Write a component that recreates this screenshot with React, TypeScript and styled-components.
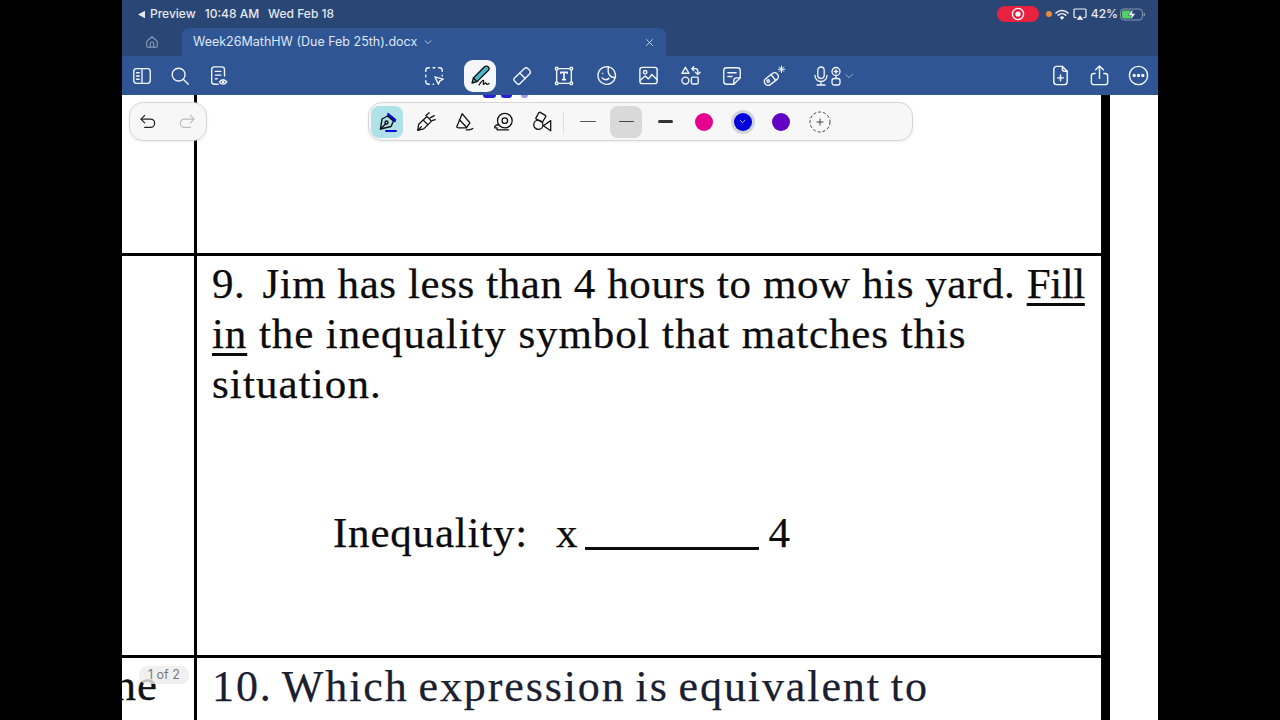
import React from 'react';
import styled, { createGlobalStyle } from 'styled-components';

const GlobalStyle = createGlobalStyle`
  html, body {
    margin: 0;
    padding: 0;
    background: #000;
    overflow: hidden;
  }
`;

const Frame = styled.div`
  width: 1280px;
  height: 720px;
  display: flex;
  justify-content: center;
  background: #000;
  overflow: hidden;
`;

const Stage = styled.div`
  position: relative;
  width: 1036px;
  height: 720px;
  display: flex;
  flex-direction: column;
  background: #fff;
  overflow: hidden;
`;

const StatusBar = styled.div`
  height: 28px;
  flex: none;
  display: flex;
  align-items: center;
  padding: 0 12px 0 15px;
  background: #2a4674;
  color: #e4e9f1;
  font: 500 12px/1 Inter, 'Liberation Sans', sans-serif;
`;

const StatusItem = styled.span<{ $left?: number }>`
  display: inline-flex;
  align-items: center;
  gap: 4px;
  margin-left: ${(p) => p.$left ?? 0}px;
`;

const StatusRight = styled.div`
  margin-left: auto;
  display: flex;
  align-items: center;
`;

const RecordPill = styled.div`
  width: 42px;
  height: 16px;
  border-radius: 8px;
  background: #e8213f;
  display: flex;
  align-items: center;
  justify-content: center;
`;

const PrivacyDot = styled.span`
  width: 6px;
  height: 6px;
  border-radius: 50%;
  background: #e98a3c;
  margin: 0 3px 0 7px;
`;

const TabBar = styled.div`
  height: 28px;
  flex: none;
  display: flex;
  background: #2a4674;
`;

const HomeSlot = styled.div`
  width: 60px;
  display: flex;
  align-items: center;
  justify-content: center;
`;

const ActiveTab = styled.div`
  width: 484px;
  display: flex;
  align-items: center;
  padding: 0 11px;
  box-sizing: border-box;
  border-radius: 7px 7px 0 0;
  background: #2f5595;
  color: #dfe6f2;
  font: 400 12.5px/1 Inter, 'Liberation Sans', sans-serif;
`;

const TabChevron = styled.span`
  display: inline-flex;
  margin-left: 6px;
`;

const TabClose = styled.span`
  display: inline-flex;
  margin-left: auto;
  margin-right: 1px;
`;

const Toolbar = styled.div`
  height: 39px;
  flex: none;
  display: flex;
  align-items: center;
  background: #2f5595;
  color: #f2f5fa;
`;

const ToolGroup = styled.div<{ $left?: number; $auto?: boolean }>`
  display: flex;
  align-items: center;
  margin-left: ${(p) => (p.$auto ? 'auto' : `${p.$left ?? 0}px`)};
`;

const ToolSlot = styled.div<{ $width: number; $after?: number }>`
  width: ${(p) => p.$width}px;
  height: 39px;
  margin-right: ${(p) => p.$after ?? 0}px;
  display: flex;
  align-items: center;
  justify-content: center;
  flex: none;
`;

const MicGroup = styled(ToolSlot)`
  gap: 2px;
`;

const ActiveTool = styled.div`
  width: 32px;
  height: 32px;
  border-radius: 9px;
  background: #f4f6fa;
  display: flex;
  align-items: center;
  justify-content: center;
`;

const Document = styled.div`
  flex: 1;
  min-height: 0;
  display: flex;
  background: #fff;
`;

const Table = styled.div`
  width: 979px;
  flex: none;
  display: flex;
  flex-direction: column;
  border-right: 9px solid #000;
  box-shadow: -1px 0 0 #9a9a9a;
`;

const Row = styled.div<{ $height: number; $ruled?: boolean }>`
  height: ${(p) => p.$height}px;
  flex: none;
  box-sizing: border-box;
  display: grid;
  grid-template-columns: 75px 1fr;
  border-top: ${(p) => (p.$ruled ? '3px solid #000' : 'none')};
`;

const SideCell = styled.div`
  border-right: 3px solid #000;
  overflow: hidden;
  display: flex;
  justify-content: flex-end;
`;

const ClippedWord = styled.span`
  margin: 2px 36px 0 0;
  font: 45px/50px 'Liberation Serif', serif;
  letter-spacing: 1px;
  color: #111;
  white-space: nowrap;
  -webkit-text-stroke: 0.3px #111;
`;

const Cell = styled.div`
  padding-left: 15px;
  color: #0c0c0c;
  font: 43px/50px 'Liberation Serif', serif;
  white-space: nowrap;
  -webkit-text-stroke: 0.25px currentColor;
`;

const Question = styled.div`
  margin-top: 3px;
`;

const Line = styled.div<{ $track: number; $size?: number; $words?: number }>`
  letter-spacing: ${(p) => p.$track}px;
  word-spacing: ${(p) => p.$words ?? 0}px;
  font-size: ${(p) => p.$size ?? 43}px;
`;

const NumberGap = styled.span`
  display: inline-block;
  width: 17px;
`;

const Underlined = styled.span`
  text-decoration: underline;
  text-decoration-thickness: 2.5px;
  text-underline-offset: 5px;
`;

const FillWord = styled(Underlined)`
  letter-spacing: -0.4px;
`;

const InequalityRow = styled.div`
  display: flex;
  align-items: baseline;
  margin: 99px 0 0 121px;
`;

const InequalityLabel = styled.span`
  letter-spacing: 0.8px;
`;

const InequalityX = styled.span`
  margin-left: 28px;
`;

const Blank = styled.span`
  width: 174px;
  height: 3px;
  margin: 0 10px 8px 7px;
  background: #0c0c0c;
  align-self: flex-end;
`;

const NextQuestion = styled.div`
  margin-top: 4px;
  color: #1a2030;
`;

const InkMarks = styled.div`
  position: absolute;
  left: 361px;
  top: 95px;
  display: flex;
  gap: 5px;
`;

const InkDot = styled.span<{ $width: number; $faint?: boolean }>`
  width: ${(p) => p.$width}px;
  height: 3px;
  margin-left: ${(p) => (p.$faint ? 4 : 0)}px;
  border-radius: 0 0 6px 6px;
  background: ${(p) => (p.$faint ? '#9a9af0' : '#2020d8')};
`;

const FloatPanel = styled.div`
  position: absolute;
  display: flex;
  align-items: center;
  box-sizing: border-box;
  height: 39px;
  background: #f7f7f7;
  border: 1px solid #d6d6d6;
  border-radius: 14px;
  box-shadow: 0 1px 3px rgba(0, 0, 0, 0.08);

  & > :first-child {
    margin-left: -1.5px;
  }
`;

const UndoPanel = styled(FloatPanel)`
  left: 7px;
  top: 102px;
  width: 78px;
`;

const PenPanel = styled(FloatPanel)`
  left: 246px;
  top: 102px;
  width: 545px;
`;

const PenSlot = styled.div`
  width: 38.75px;
  height: 37px;
  flex: none;
  display: flex;
  align-items: center;
  justify-content: center;
`;

const PenHighlight = styled.div<{ $bg: string }>`
  width: 32px;
  height: 32px;
  border-radius: 8px;
  background: ${(p) => p.$bg};
  display: flex;
  align-items: center;
  justify-content: center;
`;

const PanelDivider = styled.span`
  width: 1px;
  height: 22px;
  background: #dedede;
  flex: none;
  margin: 0 4px 0 2px;
`;

const WidthLine = styled.span<{ $w: number; $h: number; $c: string }>`
  display: block;
  width: ${(p) => p.$w}px;
  height: ${(p) => p.$h}px;
  border-radius: 2px;
  background: ${(p) => p.$c};
`;

const Swatch = styled.span<{ $c: string; $selected?: boolean }>`
  width: 18px;
  height: 18px;
  border-radius: 50%;
  background: ${(p) => p.$c};
  display: flex;
  align-items: center;
  justify-content: center;
  box-shadow: ${(p) => (p.$selected ? '0 0 0 3px #cfd3da' : 'none')};
`;

const PageBadge = styled.div`
  position: absolute;
  left: 17px;
  top: 666px;
  padding: 2px 9px;
  border-radius: 8px;
  background: rgba(236, 236, 236, 0.8);
  color: #777;
  font: 400 12.5px/14px Inter, 'Liberation Sans', sans-serif;
`;

const Glyph = styled.svg.attrs({ fill: 'none', stroke: 'currentColor', strokeLinecap: 'round', strokeLinejoin: 'round' })<{
  $color?: string;
}>`
  display: block;
  flex: none;
  color: ${(p) => p.$color ?? 'inherit'};
`;

type IconProps = { size?: number; color?: string; children: React.ReactNode; sw?: number };

const Icon = ({ size = 24, color, children, sw = 1.5 }: IconProps) => (
  <Glyph width={size} height={size} viewBox="0 0 24 24" strokeWidth={sw} $color={color}>
    {children}
  </Glyph>
);

export default function App() {
  return (
    <Frame>
      <GlobalStyle />
      <Stage>
        <StatusBar>
          <StatusItem>
            <svg width="9" height="9" viewBox="0 0 9 9"><path d="M8 .8v7.4L1 4.5z" fill="#e4e9f1" /></svg>
            Preview
          </StatusItem>
          <StatusItem $left={9}>10:48 AM</StatusItem>
          <StatusItem $left={9}>Wed Feb 18</StatusItem>
          <StatusRight>
            <RecordPill>
              <svg width="14" height="14" viewBox="0 0 14 14">
                <circle cx="7" cy="7" r="5.6" fill="none" stroke="#fff" strokeWidth="1.3" />
                <circle cx="7" cy="7" r="2.6" fill="#fff" />
              </svg>
            </RecordPill>
            <PrivacyDot />
            <svg width="14" height="11" viewBox="0 0 14 11" fill="none" stroke="#f2f4f8" strokeLinecap="round">
              <path d="M1 4a8.6 8.6 0 0 1 12 0" strokeWidth="1.6" />
              <path d="M3.3 6.2a5.4 5.4 0 0 1 7.4 0" strokeWidth="1.6" />
              <path d="M5.6 8.4a2.2 2.2 0 0 1 2.8 0L7 10z" strokeWidth="1.2" fill="#f2f4f8" />
            </svg>
            <svg width="14" height="13" viewBox="0 0 14 13" fill="none" style={{ marginLeft: 4 }}>
              <path d="M3.6 9.5H2a1 1 0 0 1-1-1V2a1 1 0 0 1 1-1h10a1 1 0 0 1 1 1v6.5a1 1 0 0 1-1 1h-1.6" stroke="#f2f4f8" strokeWidth="1.2" />
              <path d="M7 7.2l3.4 4.6H3.6z" fill="#f2f4f8" />
            </svg>
            <StatusItem $left={4}>42%</StatusItem>
            <svg width="26" height="13" viewBox="0 0 26 13" style={{ marginLeft: 2 }}>
              <rect x=".6" y="1" width="21.8" height="11" rx="3.2" fill="none" stroke="#8c9ab3" strokeWidth="1" />
              <rect x="2" y="2.4" width="9.2" height="8.2" rx="1.8" fill="#4fd163" />
              <path d="M23.6 4.6c1 .3 1.4 1 1.4 1.9s-.4 1.6-1.4 1.9z" fill="#8c9ab3" />
              <path d="M13.2.8L8 7.2h3.4l-1.2 5 5.4-6.6h-3.4z" fill="#fff" stroke="#2a4674" strokeWidth=".6" />
            </svg>
          </StatusRight>
        </StatusBar>

        <TabBar>
          <HomeSlot>
            <Icon size={14} color="#8ea0bf" sw={1.8}>
              <path d="M3 11l9-8 9 8v8a2 2 0 0 1-2 2H5a2 2 0 0 1-2-2z" />
              <path d="M9 21v-6a3 3 0 0 1 6 0v6" />
            </Icon>
          </HomeSlot>
          <ActiveTab>
            Week26MathHW (Due Feb 25th).docx
            <TabChevron>
              <Icon size={10} color="#c6d2e6" sw={2.2}><path d="M5 9l7 7 7-7" /></Icon>
            </TabChevron>
            <TabClose>
              <Icon size={9} color="#dfe6f2" sw={2.2}><path d="M4 4l16 16M20 4L4 20" /></Icon>
            </TabClose>
          </ActiveTab>
        </TabBar>

        <Toolbar>
          <ToolGroup>
            <ToolSlot $width={39}>
              <Icon size={22}>
                <rect x="3" y="4" width="18" height="16" rx="3" />
                <path d="M12 4v16M6 8.5h3M6 12h3M6 15.5h3" />
              </Icon>
            </ToolSlot>
            <ToolSlot $width={38}>
              <Icon size={22}>
                <circle cx="10.5" cy="10.5" r="7" />
                <path d="M15.8 15.8L21 21" />
              </Icon>
            </ToolSlot>
            <ToolSlot $width={39}>
              <Icon size={22}>
                <path d="M11 21H7a3 3 0 0 1-3-3V5a3 3 0 0 1 3-3h8a3 3 0 0 1 3 3v7" />
                <path d="M8 7h6M8 11h6M8 15h2" />
                <path d="M12.5 18.5c1-1.6 2.4-2.4 4-2.4s3 .8 4 2.4c-1 1.6-2.4 2.4-4 2.4s-3-.8-4-2.4z" />
                <circle cx="16.5" cy="18.5" r=".8" />
              </Icon>
            </ToolSlot>
          </ToolGroup>

          <ToolGroup $left={175}>
            <ToolSlot $width={42} $after={4}>
              <Icon size={22}>
                <path d="M3 7V6a3 3 0 0 1 3-3h1M11 3h2M17 3h1a3 3 0 0 1 3 3v1M21 11v1M3 11v2M3 17v1a3 3 0 0 0 3 3h1M11 21h.5" />
                <path d="M13 13l9 2.5-3.6 1.8-1.6 3.7z" />
              </Icon>
            </ToolSlot>
            <ToolSlot $width={42}>
              <ActiveTool>
                <svg width="24" height="24" viewBox="0 0 24 24" fill="none" stroke="#111" strokeWidth="1.3" strokeLinecap="round" strokeLinejoin="round">
                  <path d="M16.5 2.8a2.6 2.6 0 0 1 3.7 3.7L9 17.6l-5 1.4 1.4-5z" fill="#4db5c6" />
                  <path d="M5.4 14l3.6 3.6" />
                  <path d="M11 21c2-3 3.4-5 4.4-4.6s-.8 3.8.2 4c1 .2 1.2-1.8 2.2-1.6.8.2.4 1.4 1.2 1.5.7.1 1.4-.3 2-.8" />
                </svg>
              </ActiveTool>
            </ToolSlot>
            <ToolSlot $width={42}>
              <Icon size={22}>
                <path d="M3.6 14.4L14.4 4a3 3 0 0 1 4.2 0l1.6 1.6a3 3 0 0 1 0 4.2L9.6 20.4a2 2 0 0 1-2.8 0l-3.2-3.2a2 2 0 0 1 0-2.8z" />
                <path d="M9.5 8.8l6 6" />
              </Icon>
            </ToolSlot>
            <ToolSlot $width={42}>
              <Icon size={22}>
                <rect x="4" y="4" width="16" height="16" />
                <path d="M8.5 9V8h7v1M12 8v8M10.5 16h3" strokeWidth="1.8" />
                <circle cx="4" cy="4" r="1.5" fill="#2f5595" />
                <circle cx="20" cy="4" r="1.5" fill="#2f5595" />
                <circle cx="4" cy="20" r="1.5" fill="#2f5595" />
                <circle cx="20" cy="20" r="1.5" fill="#2f5595" />
              </Icon>
            </ToolSlot>
            <ToolSlot $width={42}>
              <Icon size={23}>
                <path d="M14 3a9.2 9.2 0 1 0 7.2 11c-4.7.6-8.7-3-7.2-11z" />
                <path d="M14 3c3.6.8 6.6 3.8 7.2 7.5.2 1.3.2 2.4 0 3.5" />
                <path d="M7.5 14.5c1.8 2.4 5 2.4 7 .5M8 10h.01" />
              </Icon>
            </ToolSlot>
            <ToolSlot $width={42}>
              <Icon size={23}>
                <rect x="3" y="3.5" width="18" height="17" rx="2.5" />
                <circle cx="8.5" cy="8.5" r="1.8" />
                <path d="M3.5 17l5-4.5 3.5 3 3.5-4.5 5.5 5.5" />
              </Icon>
            </ToolSlot>
            <ToolSlot $width={42}>
              <Icon size={22}>
                <path d="M7 2.5l3.8 6.5H3.2z" />
                <circle cx="7" cy="17" r="3.8" />
                <rect x="13.5" y="13.2" width="7.5" height="7.5" rx="1.5" />
                <path d="M14 4h4a2.5 2.5 0 0 1 2.5 2.5V10M18 8l2.5 2.5L23 8M16 2l-2 2 2 2" />
              </Icon>
            </ToolSlot>
            <ToolSlot $width={42}>
              <Icon size={22}>
                <path d="M14 21H6a3 3 0 0 1-3-3V6a3 3 0 0 1 3-3h12a3 3 0 0 1 3 3v8z" />
                <path d="M14 21v-4a3 3 0 0 1 3-3h4M7.5 8.5h9M7.5 12.5h4.5" />
              </Icon>
            </ToolSlot>
            <ToolSlot $width={42} $after={9}>
              <Icon size={24} sw={1.4}>
                <rect x="1.5" y="11.5" width="15.5" height="7.5" rx="3.5" transform="rotate(-38 9 15)" />
                <path d="M9 10.5l4.8 6" />
                <circle cx="6.2" cy="17" r="1.2" />
                <path d="M19.5 2v6.5M16.2 5.2h6.6M17.3 3l4.4 4.4M21.7 3l-4.4 4.4" strokeWidth="1" />
              </Icon>
            </ToolSlot>
            <MicGroup $width={60}>
              <svg width="14" height="20" viewBox="0 0 14 20" fill="none" stroke="currentColor" strokeWidth="1.3" strokeLinecap="round">
                <rect x="3.8" y="1" width="6.4" height="11.5" rx="3.2" />
                <path d="M1 9.5a6 6 0 0 0 12 0M7 15.5V19M3 19h8" />
              </svg>
              <svg width="12" height="20" viewBox="0 0 12 20" fill="none" stroke="currentColor" strokeWidth="1.3" strokeLinecap="round">
                <circle cx="6" cy="5.5" r="4" />
                <path d="M6 3.8v3.4M4.3 5.5h3.4" />
                <rect x="2" y="12.5" width="8" height="6.5" rx="2.2" />
                <path d="M6 9.5v3" />
              </svg>
              <Icon size={10} color="#a9b9d3" sw={2.2}><path d="M4 8l8 8 8-8" /></Icon>
            </MicGroup>
          </ToolGroup>

          <ToolGroup $auto>
            <ToolSlot $width={39}>
              <Icon size={23}>
                <path d="M14 2.5H8a3 3 0 0 0-3 3v13a3 3 0 0 0 3 3h8a3 3 0 0 0 3-3V7.5z" />
                <path d="M14 2.5v3a2 2 0 0 0 2 2h3M12 11.5v6M9 14.5h6" />
              </Icon>
            </ToolSlot>
            <ToolSlot $width={39}>
              <Icon size={23}>
                <path d="M12 15V2.5M8 6l4-4 4 4" />
                <path d="M7.5 10H6a2.5 2.5 0 0 0-2.5 2.5V19A2.5 2.5 0 0 0 6 21.5h12a2.5 2.5 0 0 0 2.5-2.5v-6.5A2.5 2.5 0 0 0 18 10h-1.5" />
              </Icon>
            </ToolSlot>
            <ToolSlot $width={39}>
              <Icon size={23}>
                <circle cx="12" cy="12" r="9.5" />
                <circle cx="7.5" cy="12" r="1" fill="currentColor" />
                <circle cx="12" cy="12" r="1" fill="currentColor" />
                <circle cx="16.5" cy="12" r="1" fill="currentColor" />
              </Icon>
            </ToolSlot>
          </ToolGroup>
        </Toolbar>

        <Document>
          <Table>
            <Row $height={158}>
              <SideCell />
              <Cell />
            </Row>
            <Row $height={402} $ruled>
              <SideCell />
              <Cell>
                <Question>
                  <Line $track={0.58}>
                    9.<NumberGap />Jim has less than 4 hours to mow his yard. <FillWord>Fill</FillWord>
                  </Line>
                  <Line $track={0.9}>
                    <Underlined>in</Underlined> the inequality symbol that matches this
                  </Line>
                  <Line $track={1.1}>situation.</Line>
                </Question>
                <InequalityRow>
                  <InequalityLabel>Inequality:</InequalityLabel>
                  <InequalityX>x</InequalityX>
                  <Blank />
                  <span>4</span>
                </InequalityRow>
              </Cell>
            </Row>
            <Row $height={65} $ruled>
              <SideCell>
                <ClippedWord>he</ClippedWord>
              </SideCell>
              <Cell>
                <NextQuestion>
                  <Line $track={1.9} $size={44} $words={-3}>10. Which expression is equivalent to</Line>
                </NextQuestion>
              </Cell>
            </Row>
          </Table>
        </Document>

        <InkMarks>
          <InkDot $width={13} />
          <InkDot $width={11} />
          <InkDot $width={7} $faint />
        </InkMarks>

        <UndoPanel>
          <PenSlot>
            <Icon size={20} color="#222">
              <path d="M8 4L3.5 8.5 8 13" />
              <path d="M4 8.5h11a5 5 0 0 1 0 10H8" />
            </Icon>
          </PenSlot>
          <PenSlot>
            <Icon size={20} color="#bcbcbc">
              <path d="M16 4l4.5 4.5L16 13" />
              <path d="M20 8.5H9a5 5 0 0 0 0 10h7" />
            </Icon>
          </PenSlot>
        </UndoPanel>

        <PenPanel>
          <PenSlot>
            <PenHighlight $bg="#aee1e8">
              <svg width="24" height="24" viewBox="0 0 24 24" fill="none" stroke="#111" strokeWidth="1.4" strokeLinejoin="round" strokeLinecap="round">
                <path d="M13 3.5l7.5 6-.5 2-7-6z" fill="#0a0ad2" stroke="#0a0ad2" />
                <path d="M12.5 6l6 5-2.5 5.5-10.5 2.5 1.5-10z" />
                <path d="M5.5 19l5-5" />
                <circle cx="11.5" cy="12.5" r="1.5" />
                <path d="M11 21h10" stroke="#0a0ad2" strokeWidth="1.8" />
              </svg>
            </PenHighlight>
          </PenSlot>
          <PenSlot>
            <Icon size={22} color="#111" sw={1.4}>
              <path d="M3 21l1-6.5L13 6l5 5-8.5 8.5z" />
              <path d="M3.5 20.5l3.5-3.5M9 10l5 5" />
              <path d="M12 5l3.5-3M16.5 7.5L21 5M18.5 10.5l3.5-1" />
            </Icon>
          </PenSlot>
          <PenSlot>
            <Icon size={22} color="#111" sw={1.4}>
              <path d="M4 17.5L10 3l8.5 10-4 5.5H6z" />
              <path d="M7 9.5l8 8.5" />
              <path d="M14.5 20.5c2.5.5 5 0 7-1.5" />
            </Icon>
          </PenSlot>
          <PenSlot>
            <Icon size={22} color="#111" sw={1.4}>
              <circle cx="14" cy="10.5" r="8" />
              <circle cx="14" cy="10.5" r="3" />
              <path d="M7 15c-3 0-4.5 1.5-4 3.5h2.5v2H18" />
            </Icon>
          </PenSlot>
          <PenSlot>
            <Icon size={22} color="#111" sw={1.4}>
              <rect x="6.5" y="2.5" width="8.5" height="8.5" rx="1" transform="rotate(30 10.7 6.7)" />
              <circle cx="8" cy="15" r="5" />
              <path d="M21.5 10.5v11l-8-5.5z" />
            </Icon>
          </PenSlot>
          <PanelDivider />
          <PenSlot>
            <WidthLine $w={16} $h={1} $c="#555" />
          </PenSlot>
          <PenSlot>
            <PenHighlight $bg="#d9d9d9">
              <WidthLine $w={15} $h={1.5} $c="#444" />
            </PenHighlight>
          </PenSlot>
          <PenSlot>
            <WidthLine $w={15} $h={3} $c="#333" />
          </PenSlot>
          <PenSlot>
            <Swatch $c="#e6008f" />
          </PenSlot>
          <PenSlot>
            <Swatch $c="#0000dc" $selected>
              <Icon size={7} color="#cfd8ff" sw={3}><path d="M4 8l8 8 8-8" /></Icon>
            </Swatch>
          </PenSlot>
          <PenSlot>
            <Swatch $c="#6200c4" />
          </PenSlot>
          <PenSlot>
            <svg width="22" height="22" viewBox="0 0 22 22" fill="none" stroke="#444" strokeWidth="1">
              <circle cx="11" cy="11" r="10" strokeDasharray="3 2" />
              <path d="M11 7.5v7M7.5 11h7" />
            </svg>
          </PenSlot>
        </PenPanel>

        <PageBadge>1 of 2</PageBadge>
      </Stage>
    </Frame>
  );
}
